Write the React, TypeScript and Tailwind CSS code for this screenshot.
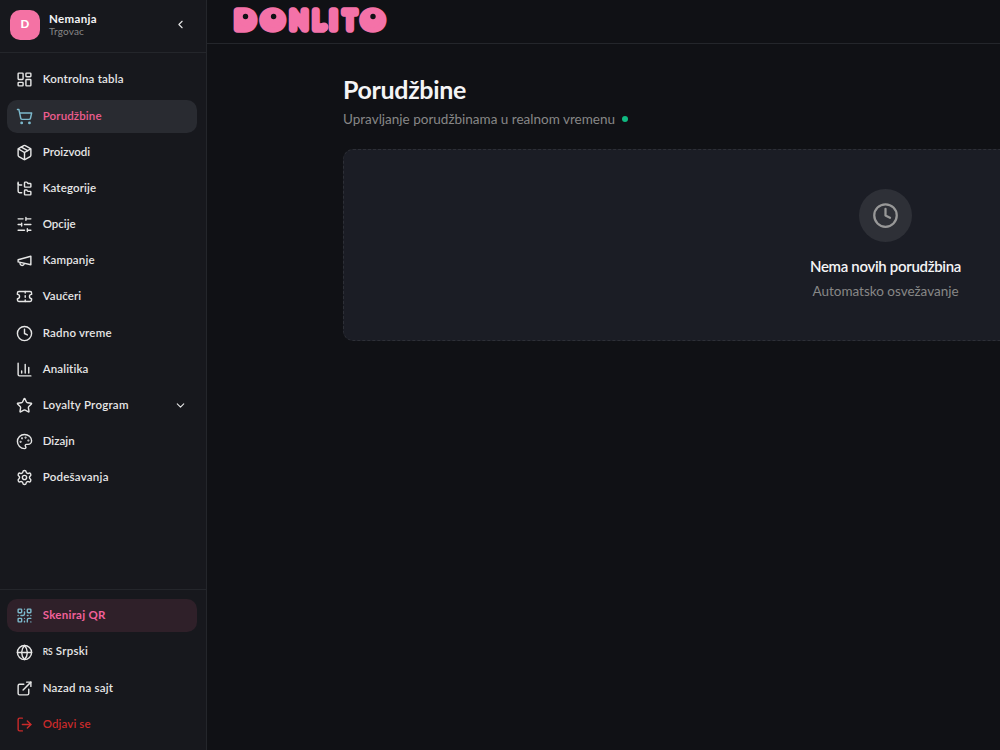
import React from 'react';
import {
    LayoutDashboard, ShoppingCart, Package, FolderTree, Ticket, Clock, ChartColumn, Star,
    Palette, Settings, QrCode, Globe, ExternalLink, LogOut, ChevronLeft, ChevronDown,
} from 'lucide-react';

type IconProps = { size?: number; className?: string };

const Sliders: React.FC<IconProps> = ({ size = 17, className }) => (
    <svg width={size} height={size} viewBox="0 0 24 24" fill="none" stroke="currentColor" strokeWidth="2" strokeLinecap="round" strokeLinejoin="round" className={className}>
        <path d="M21 4h-7M10 4H3M21 12h-9M8 12H3M21 20h-5M12 20H3M14 2v4M8 10v4M16 18v4" />
    </svg>
);

const Megaphone: React.FC<IconProps> = ({ size = 17, className }) => (
    <svg width={size} height={size} viewBox="0 0 24 24" fill="none" stroke="currentColor" strokeWidth="2" strokeLinecap="round" strokeLinejoin="round" className={className}>
        <path d="m3 11 18-5v12L3 14v-3z" />
        <path d="M11.6 16.8a3 3 0 1 1-5.8-1.6" />
    </svg>
);

type Item = { label: string; icon: React.ElementType; width: number; chevron?: boolean; kind?: 'active' | 'scan' | 'danger'; flag?: string };

const mainItems: Item[] = [
    { label: 'Kontrolna tabla', icon: LayoutDashboard, width: 81 },
    { label: 'Porudžbine', icon: ShoppingCart, width: 59, kind: 'active' },
    { label: 'Proizvodi', icon: Package, width: 47.5 },
    { label: 'Kategorije', icon: FolderTree, width: 53.5 },
    { label: 'Opcije', icon: Sliders, width: 33 },
    { label: 'Kampanje', icon: Megaphone, width: 52 },
    { label: 'Vaučeri', icon: Ticket, width: 38.5 },
    { label: 'Radno vreme', icon: Clock, width: 69 },
    { label: 'Analitika', icon: ChartColumn, width: 46 },
    { label: 'Loyalty Program', icon: Star, width: 86, chevron: true },
    { label: 'Dizajn', icon: Palette, width: 32 },
    { label: 'Podešavanja', icon: Settings, width: 66 },
];

const footerItems: Item[] = [
    { label: 'Skeniraj QR', icon: QrCode, width: 63, kind: 'scan' },
    { label: 'Srpski', icon: Globe, width: 32.5, flag: 'RS' },
    { label: 'Nazad na sajt', icon: ExternalLink, width: 70.5 },
    { label: 'Odjavi se', icon: LogOut, width: 48, kind: 'danger' },
];

// Text run stretched to a fixed advance width
const Fit: React.FC<{ text: string; width: number }> = ({ text, width }) => {
    const ref = React.useRef<HTMLSpanElement>(null);
    const [spacing, setSpacing] = React.useState(0);
    React.useLayoutEffect(() => {
        if (ref.current) setSpacing((width - ref.current.getBoundingClientRect().width) / text.length);
    }, []);
    return <span ref={ref} className="inline-block whitespace-nowrap" style={{ letterSpacing: `${spacing}px` }}>{text}</span>;
};

const rowStyles = {
    base: 'text-[#e6e6e6] font-semibold',
    active: 'bg-[#292b31] text-[#ee5d8f] font-semibold',
    scan: 'bg-[#2f2029] text-[#f2609a] font-bold',
    danger: 'text-[#c92a2a] font-semibold',
};

const NavRow: React.FC<{ item: Item }> = ({ item }) => {
    const Icon = item.icon;
    const tinted = item.kind === 'active' || item.kind === 'scan';
    return (
        <div className={`flex h-[33px] shrink-0 items-center rounded-[10px] pr-2.5 pl-[9.5px] text-[11.5px] ${rowStyles[item.kind ?? 'base']}`}>
            <Icon size={17} className={tinted ? 'shrink-0 text-[#7cb9cc]' : 'shrink-0'} />
            <span className="ml-[9.7px] flex items-baseline pb-px leading-4">
                {item.flag && <span className="mr-[3px] text-[8.5px]"><Fit text={item.flag} width={10} /></span>}
                <Fit text={item.label} width={item.width} />
            </span>
            {item.chevron && <ChevronDown size={13} className="ml-auto" />}
        </div>
    );
};

const letters = [
    { ch: 'D', x: 2, w: 20 },
    { ch: 'O', x: 28.7, w: 22 },
    { ch: 'N', x: 57, w: 17.8 },
    { ch: 'L', x: 79.8, w: 10.8 },
    { ch: 'I', x: 96.9, w: 7 },
    { ch: 'T', x: 110.4, w: 12.7 },
    { ch: 'O', x: 128.7, w: 22 },
];

const Logo: React.FC = () => (
    <svg width="156" height="36" viewBox="0 0 156 36" className="block overflow-visible" fill="#f472a8" stroke="#f472a8" strokeWidth="7.5" strokeLinejoin="round">
        {letters.map((l, i) => (
            <text key={i} x={l.x} y="22.7" fontSize="25.8" fontWeight="400" fontFamily="Lato, sans-serif" textLength={l.w} lengthAdjust="spacingAndGlyphs">{l.ch}</text>
        ))}
        {/* Curled foot of the L */}
        <circle cx="91" cy="21" r="4.6" stroke="none" />
        <g stroke="none">
            <ellipse cx="12.5" cy="13.5" rx="6" ry="7" />
            <ellipse cx="40.3" cy="13.5" rx="7" ry="8" />
            <ellipse cx="140.2" cy="13.5" rx="7" ry="8" />
        </g>
        <g fill="#101115" stroke="none">
            <circle cx="12.5" cy="10.5" r="2.7" />
            <circle cx="40.6" cy="10.5" r="2.7" />
            <circle cx="140" cy="10.5" r="2.7" />
        </g>
    </svg>
);

const App: React.FC = () => (
    <div className="flex h-[750px] w-[1000px] overflow-hidden bg-[#101115] font-['Lato','Noto_Sans',sans-serif]">
        {/* Sidebar */}
        <aside className="flex w-[207px] shrink-0 flex-col border-r border-[#24262b] bg-[#17181d]">
            <div className="flex h-[53px] items-center border-b border-[#24262b] px-2.5 pb-[3px]">
                <div className="flex size-[30px] items-center justify-center rounded-[10px] bg-[#f472a4] pb-px text-[11.5px] font-black text-white">D</div>
                <div className="ml-[9px] pb-px">
                    <div className="text-[11.5px] leading-[13px] font-bold text-[#f4f4f5]"><Fit text="Nemanja" width={48} /></div>
                    <div className="text-[10px] leading-[12px] text-[#878787]"><Fit text="Trgovac" width={35} /></div>
                </div>
                <ChevronLeft size={13} className="mr-[9px] ml-auto text-[#e6e6e6]" />
            </div>
            <nav className="flex flex-1 flex-col gap-[3.18px] pt-[10.4px] pr-[9.5px] pl-[6.5px]">
                {mainItems.map(item => <NavRow key={item.label} item={item} />)}
            </nav>
            <div className="flex h-[161px] flex-col gap-[3.18px] border-t border-[#24262b] pt-[9.4px] pr-[9.5px] pl-[6.5px]">
                {footerItems.map(item => <NavRow key={item.label} item={item} />)}
            </div>
        </aside>

        {/* Content */}
        <div className="min-w-0 flex-1">
            <header className="h-[44px] border-b border-[#24262b] pt-[6px] pl-[25.5px]">
                <Logo />
            </header>
            <main className="pt-[29px] pl-[136px]">
                <h1 className="text-[25px] leading-[32px] font-bold text-[#f4f4f5]"><Fit text="Porudžbine" width={123} /></h1>
                <div className="mt-[5px] flex items-center text-[13.5px] leading-[18px] text-[#878787]">
                    <Fit text="Upravljanje porudžbinama u realnom vremenu" width={272} />
                    <span className="ml-[6.5px] size-[6.5px] rounded-full bg-[#10b981]"></span>
                </div>
                <section className="mt-[21px] flex h-[192px] w-[1085px] flex-col items-center rounded-[10px] border border-dashed border-[#2d2f36] bg-[#1b1d25] pt-[39px]">
                    <div className="flex size-[53px] items-center justify-center rounded-full bg-[#2e3037]">
                        <Clock size={27} className="text-[#989898]" />
                    </div>
                    <div className="mt-[14px] text-[15px] leading-5 font-semibold text-[#f4f4f5]"><Fit text="Nema novih porudžbina" width={151} /></div>
                    <div className="mt-[5px] text-[13.5px] leading-5 text-[#878787]"><Fit text="Automatsko osvežavanje" width={146} /></div>
                </section>
            </main>
        </div>
    </div>
);

export default App;
